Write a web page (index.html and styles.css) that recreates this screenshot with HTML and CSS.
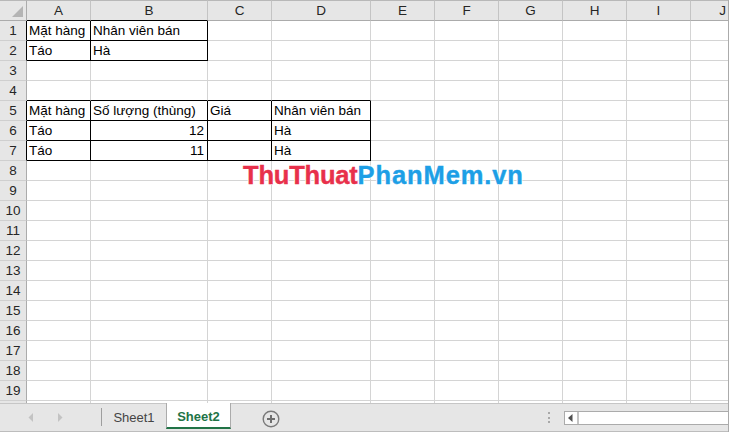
FILE: index.html
```html
<!DOCTYPE html>
<html lang="vi">
<head>
<meta charset="utf-8">
<title>Sheet2</title>
<link rel="stylesheet" href="styles.css">
</head>
<body>
<div class="app">
  <div class="sheet">
    <div class="row hdr">
      <div class="corner"><span class="tri"></span></div>
      <div class="hc kb">A</div><div class="hc b kb">B</div><div class="hc">C</div><div class="hc d">D</div><div class="hc">E</div><div class="hc">F</div><div class="hc">G</div><div class="hc">H</div><div class="hc">I</div><div class="hc">J</div>
    </div>
    <div class="row"><div class="rh k">1</div><div class="c k">Mặt hàng</div><div class="c b k">Nhân viên bán</div><div class="c"></div><div class="c d"></div><div class="c"></div><div class="c"></div><div class="c"></div><div class="c"></div><div class="c"></div><div class="c"></div></div>
    <div class="row"><div class="rh k">2</div><div class="c k">Táo</div><div class="c b k">Hà</div><div class="c"></div><div class="c d"></div><div class="c"></div><div class="c"></div><div class="c"></div><div class="c"></div><div class="c"></div><div class="c"></div></div>
    <div class="row"><div class="rh">3</div><div class="c"></div><div class="c b"></div><div class="c"></div><div class="c d"></div><div class="c"></div><div class="c"></div><div class="c"></div><div class="c"></div><div class="c"></div><div class="c"></div></div>
    <div class="row"><div class="rh">4</div><div class="c kb"></div><div class="c b kb"></div><div class="c kb"></div><div class="c d kb"></div><div class="c"></div><div class="c"></div><div class="c"></div><div class="c"></div><div class="c"></div><div class="c"></div></div>
    <div class="row"><div class="rh k">5</div><div class="c k">Mặt hàng</div><div class="c b k">Số lượng (thùng)</div><div class="c k">Giá</div><div class="c d k">Nhân viên bán</div><div class="c"></div><div class="c"></div><div class="c"></div><div class="c"></div><div class="c"></div><div class="c"></div></div>
    <div class="row"><div class="rh k">6</div><div class="c k">Táo</div><div class="c b k num">12</div><div class="c k"></div><div class="c d k">Hà</div><div class="c"></div><div class="c"></div><div class="c"></div><div class="c"></div><div class="c"></div><div class="c"></div></div>
    <div class="row"><div class="rh k">7</div><div class="c k">Táo</div><div class="c b k num">11</div><div class="c k"></div><div class="c d k">Hà</div><div class="c"></div><div class="c"></div><div class="c"></div><div class="c"></div><div class="c"></div><div class="c"></div></div>
    <div class="row"><div class="rh">8</div><div class="c"></div><div class="c b"></div><div class="c"></div><div class="c d"></div><div class="c"></div><div class="c"></div><div class="c"></div><div class="c"></div><div class="c"></div><div class="c"></div></div>
    <div class="row"><div class="rh">9</div><div class="c"></div><div class="c b"></div><div class="c"></div><div class="c d"></div><div class="c"></div><div class="c"></div><div class="c"></div><div class="c"></div><div class="c"></div><div class="c"></div></div>
    <div class="row"><div class="rh">10</div><div class="c"></div><div class="c b"></div><div class="c"></div><div class="c d"></div><div class="c"></div><div class="c"></div><div class="c"></div><div class="c"></div><div class="c"></div><div class="c"></div></div>
    <div class="row"><div class="rh">11</div><div class="c"></div><div class="c b"></div><div class="c"></div><div class="c d"></div><div class="c"></div><div class="c"></div><div class="c"></div><div class="c"></div><div class="c"></div><div class="c"></div></div>
    <div class="row"><div class="rh">12</div><div class="c"></div><div class="c b"></div><div class="c"></div><div class="c d"></div><div class="c"></div><div class="c"></div><div class="c"></div><div class="c"></div><div class="c"></div><div class="c"></div></div>
    <div class="row"><div class="rh">13</div><div class="c"></div><div class="c b"></div><div class="c"></div><div class="c d"></div><div class="c"></div><div class="c"></div><div class="c"></div><div class="c"></div><div class="c"></div><div class="c"></div></div>
    <div class="row"><div class="rh">14</div><div class="c"></div><div class="c b"></div><div class="c"></div><div class="c d"></div><div class="c"></div><div class="c"></div><div class="c"></div><div class="c"></div><div class="c"></div><div class="c"></div></div>
    <div class="row"><div class="rh">15</div><div class="c"></div><div class="c b"></div><div class="c"></div><div class="c d"></div><div class="c"></div><div class="c"></div><div class="c"></div><div class="c"></div><div class="c"></div><div class="c"></div></div>
    <div class="row"><div class="rh">16</div><div class="c"></div><div class="c b"></div><div class="c"></div><div class="c d"></div><div class="c"></div><div class="c"></div><div class="c"></div><div class="c"></div><div class="c"></div><div class="c"></div></div>
    <div class="row"><div class="rh">17</div><div class="c"></div><div class="c b"></div><div class="c"></div><div class="c d"></div><div class="c"></div><div class="c"></div><div class="c"></div><div class="c"></div><div class="c"></div><div class="c"></div></div>
    <div class="row"><div class="rh">18</div><div class="c"></div><div class="c b"></div><div class="c"></div><div class="c d"></div><div class="c"></div><div class="c"></div><div class="c"></div><div class="c"></div><div class="c"></div><div class="c"></div></div>
    <div class="row"><div class="rh">19</div><div class="c"></div><div class="c b"></div><div class="c"></div><div class="c d"></div><div class="c"></div><div class="c"></div><div class="c"></div><div class="c"></div><div class="c"></div><div class="c"></div></div>
    <div class="row"><div class="rh"></div><div class="c"></div><div class="c b"></div><div class="c"></div><div class="c d"></div><div class="c"></div><div class="c"></div><div class="c"></div><div class="c"></div><div class="c"></div><div class="c"></div></div>

    <div class="logo"><span class="red">ThuThuat</span><span class="blue">PhanMem.vn</span></div>
  </div>

  <div class="tabbar">
    <div class="nav">
      <svg class="arr" width="6" height="9" viewBox="0 0 6 9"><path d="M5 0 L0.5 4.5 L5 9 Z" fill="#c3c3c3"/></svg>
      <svg class="arr arr2" width="6" height="9" viewBox="0 0 6 9"><path d="M1 0 L5.5 4.5 L1 9 Z" fill="#c3c3c3"/></svg>
    </div>
    <div class="sep"></div>
    <div class="tab">Sheet1</div>
    <div class="tab active">Sheet2</div>
    <svg class="add" width="18" height="18" viewBox="0 0 18 18">
      <circle cx="9" cy="9" r="7.8" fill="none" stroke="#7a7a7a" stroke-width="1.4"/>
      <path d="M9 5 V13 M5 9 H13" stroke="#6e6e6e" stroke-width="2"/>
    </svg>
    <div class="grip"><i></i><i></i><i></i></div>
    <div class="hscroll">
      <div class="sbtn"><svg width="5" height="8" viewBox="0 0 5 8"><path d="M4.5 0 L0 4 L4.5 8 Z" fill="#505050"/></svg></div>
      <div class="track"></div>
    </div>
  </div>
</div>
</body>
</html>
```
FILE: styles.css
```css
* { box-sizing: border-box; }
html, body { margin: 0; padding: 0; background: #fff; }
body { width: 729px; height: 432px; overflow: hidden; font-family: "Liberation Sans", Arial, sans-serif; }

.app { width: 729px; height: 432px; display: flex; flex-direction: column; border-right: 1px solid #ababab; }

.sheet { position: relative; height: 403px; overflow: hidden; flex: none; }

.row { display: flex; height: 20px; }
.row.hdr { height: 21px; }

.corner { width: 27px; flex: none; height: 21px; background: #e6e6e6; border-top: 1px solid #b8b8b8; border-right: 1px solid #ababab; border-bottom: 1px solid #ababab; position: relative; }
.tri { position: absolute; right: 3px; bottom: 3px; width: 0; height: 0; border-left: 11px solid transparent; border-bottom: 11px solid #b4b4b4; }

.hc { width: 64px; flex: none; height: 21px; background: #e6e6e6; border-top: 1px solid #b8b8b8; border-right: 1px solid #c4c4c4; border-bottom: 1px solid #ababab; text-align: center; font-size: 13.5px; line-height: 19px; color: #262626; }

.rh { width: 27px; flex: none; height: 20px; background: #e6e6e6; border-right: 1px solid #ababab; border-bottom: 1px solid #cfcfcf; text-align: center; font-size: 13.5px; line-height: 18px; padding-top: 1px; color: #262626; }

.c { width: 64px; flex: none; height: 20px; border-right: 1px solid #d4d4d4; border-bottom: 1px solid #d4d4d4; font-size: 13.5px; line-height: 18px; padding: 1px 2px 0 2px; white-space: nowrap; color: #000; }
.b { width: 117px; }
.d { width: 99px; }
.num { text-align: right; padding-right: 3px; }

.c.k { border-right-color: #000; border-bottom-color: #000; }
.kb { border-bottom-color: #000; }
.rh.k { border-right-color: #000; }
.hc.kb { border-bottom-color: #000; }

.logo { position: absolute; left: 243px; top: 163px; font-size: 25.5px; line-height: 1; font-weight: bold; white-space: nowrap; -webkit-text-stroke: 0.4px currentColor; text-shadow: 0 0 2px #fff, 1px 0 0 #fff, -1px 0 0 #fff, 0 1px 0 #fff, 0 -1px 0 #fff; }
.red { color: #e8304b; letter-spacing: -0.2px; }
.blue { color: #1d9fe6; letter-spacing: 0.9px; }

.tabbar { flex: 1; background: #e6e6e6; border-top: 1px solid #c6c6c6; border-bottom: 1px solid #bdbdbd; display: flex; align-items: flex-start; position: relative; }

.nav { width: 101px; flex: none; height: 27px; display: flex; align-items: center; padding-left: 28px; }
.arr { display: block; }
.arr2 { margin-left: 23px; }

.sep { width: 1px; height: 18px; margin-top: 4px; background: #9e9e9e; flex: none; }

.tab { width: 64px; flex: none; height: 25px; text-align: center; font-size: 13px; line-height: 23px; padding-top: 2px; color: #444; }
.tab.active { width: 65px; margin-top: -1px; height: 26px; background: #fff; color: #217346; font-weight: bold; border-left: 1px solid #ababab; border-right: 1px solid #ababab; border-bottom: 2px solid #217346; line-height: 22px; padding-top: 3px; }

.add { margin-left: 31px; margin-top: 6px; flex: none; display: block; }

.grip { margin-left: 268px; margin-top: 8px; width: 2px; display: flex; flex-direction: column; gap: 2.5px; flex: none; }
.grip i { display: block; width: 2px; height: 2px; background: #a8a8a8; }

.hscroll { margin-left: 14px; margin-top: 7px; height: 14px; flex: 1; display: flex; border: 1px solid #ababab; border-right: none; background: #fff; }
.sbtn { width: 14px; height: 12px; display: flex; align-items: center; justify-content: center; border-right: 2px solid #c4c4c4; flex: none; }
.sbtn svg { display: block; margin-left: -1px; }
.track { flex: 1; }
```
